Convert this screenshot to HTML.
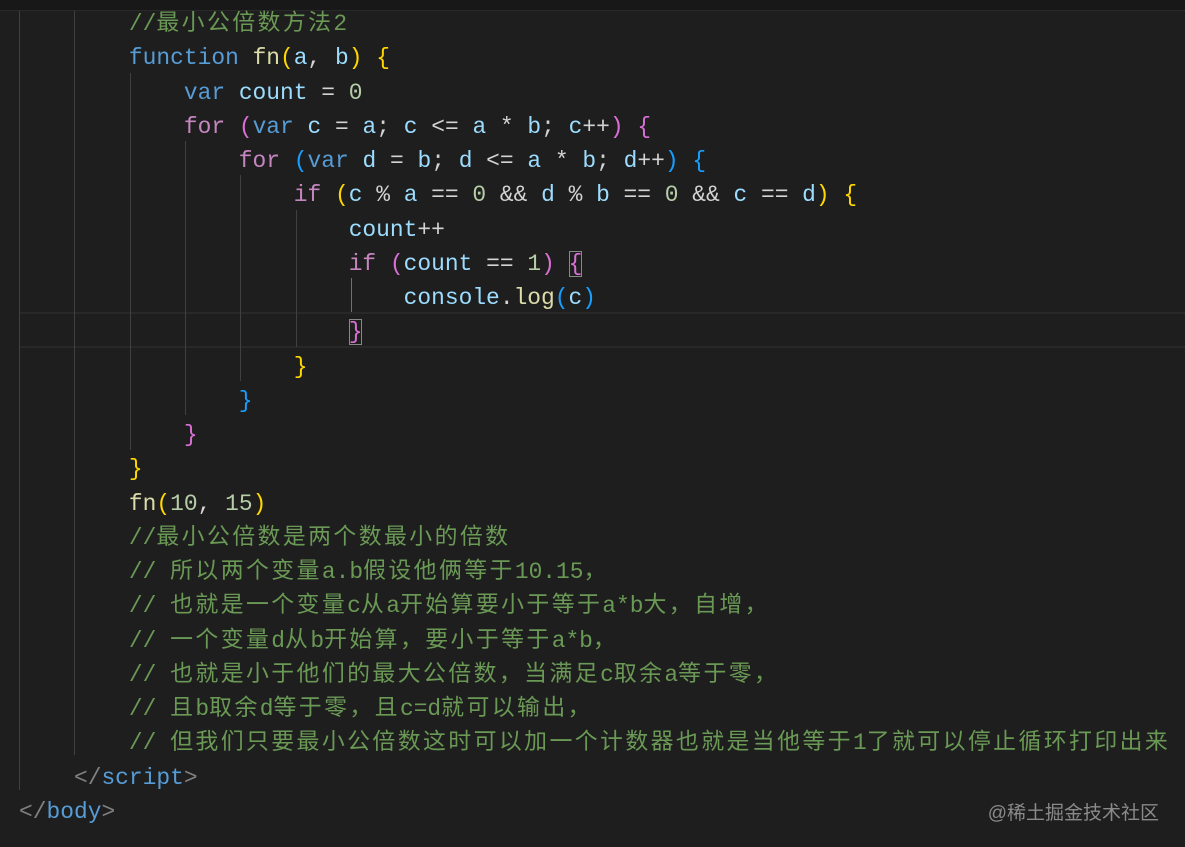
<!DOCTYPE html>
<html><head><meta charset="utf-8"><style>
body{margin:0;background:#1e1e1e;width:1185px;height:847px;overflow:hidden;position:relative}
.top{position:absolute;left:0;top:0;width:1185px;height:10px;background:#181818;border-bottom:1px solid #2a2a2a}
.g{position:absolute;width:1px;background:#404040}
.hl{position:absolute;left:19px;right:0;top:312px;height:32px;border-top:2px solid #282828;border-bottom:2px solid #282828}
pre{position:absolute;left:19px;top:7px;margin:0;font-family:"Liberation Mono","Noto Sans CJK SC",monospace;font-size:22.9px;line-height:34.25px;color:#d4d4d4;white-space:pre}
.k{color:#569cd6}.c{color:#c586c0}.v{color:#9cdcfe}.f{color:#dcdcaa}.n{color:#b5cea8}.m{color:#6a9955}
.y{color:#ffd700}.p{color:#da70d6}.b{color:#179fff}.t{color:#808080}
i{font-style:normal;letter-spacing:2.4px}
.box{outline:1px solid #888;outline-offset:-1px}
.wm{position:absolute;right:26px;top:798px;font-family:"Liberation Sans","Noto Sans CJK SC",sans-serif;font-size:19px;color:#8a8a8a}
</style></head><body>
<div class="top"></div>
<div class="hl"></div>
<div class="g" style="left:19px;top:11px;height:779px"></div>
<div class="g" style="left:74px;top:11px;height:744px"></div>
<div class="g" style="left:130px;top:73px;height:377px"></div>
<div class="g" style="left:185px;top:141px;height:274px"></div>
<div class="g" style="left:240px;top:175px;height:206px"></div>
<div class="g" style="left:296px;top:210px;height:137px"></div>
<div class="g" style="left:351px;top:278px;height:34px;background:#707070"></div>
<pre><span class="m">        //<i>最小公倍数方法</i>2</span>
        <span class="k">function</span> <span class="f">fn</span><span class="y">(</span><span class="v">a</span>, <span class="v">b</span><span class="y">)</span> <span class="y">{</span>
            <span class="k">var</span> <span class="v">count</span> = <span class="n">0</span>
            <span class="c">for</span> <span class="p">(</span><span class="k">var</span> <span class="v">c</span> = <span class="v">a</span>; <span class="v">c</span> &lt;= <span class="v">a</span> * <span class="v">b</span>; <span class="v">c</span>++<span class="p">)</span> <span class="p">{</span>
                <span class="c">for</span> <span class="b">(</span><span class="k">var</span> <span class="v">d</span> = <span class="v">b</span>; <span class="v">d</span> &lt;= <span class="v">a</span> * <span class="v">b</span>; <span class="v">d</span>++<span class="b">)</span> <span class="b">{</span>
                    <span class="c">if</span> <span class="y">(</span><span class="v">c</span> % <span class="v">a</span> == <span class="n">0</span> &amp;&amp; <span class="v">d</span> % <span class="v">b</span> == <span class="n">0</span> &amp;&amp; <span class="v">c</span> == <span class="v">d</span><span class="y">)</span> <span class="y">{</span>
                        <span class="v">count</span>++
                        <span class="c">if</span> <span class="p">(</span><span class="v">count</span> == <span class="n">1</span><span class="p">)</span> <span class="p box">{</span>
                            <span class="v">console</span>.<span class="f">log</span><span class="b">(</span><span class="v">c</span><span class="b">)</span>
                        <span class="p box">}</span>
                    <span class="y">}</span>
                <span class="b">}</span>
            <span class="p">}</span>
        <span class="y">}</span>
        <span class="f">fn</span><span class="y">(</span><span class="n">10</span>, <span class="n">15</span><span class="y">)</span>
<span class="m">        //<i>最小公倍数是两个数最小的倍数</i></span>
<span class="m">        // <i>所以两个变量</i>a.b<i>假设他俩等于</i>10.15<i>，</i></span>
<span class="m">        // <i>也就是一个变量</i>c<i>从</i>a<i>开始算要小于等于</i>a*b<i>大，自增，</i></span>
<span class="m">        // <i>一个变量</i>d<i>从</i>b<i>开始算，要小于等于</i>a*b<i>，</i></span>
<span class="m">        // <i>也就是小于他们的最大公倍数，当满足</i>c<i>取余</i>a<i>等于零，</i></span>
<span class="m">        // <i>且</i>b<i>取余</i>d<i>等于零，且</i>c=d<i>就可以输出，</i></span>
<span class="m">        // <i>但我们只要最小公倍数这时可以加一个计数器也就是当他等于</i>1<i>了就可以停止循环打印出来</i></span>
    <span class="t">&lt;/</span><span class="k">script</span><span class="t">&gt;</span>
<span class="t">&lt;/</span><span class="k">body</span><span class="t">&gt;</span></pre>
<div class="wm">@稀土掘金技术社区</div>
</body></html>
